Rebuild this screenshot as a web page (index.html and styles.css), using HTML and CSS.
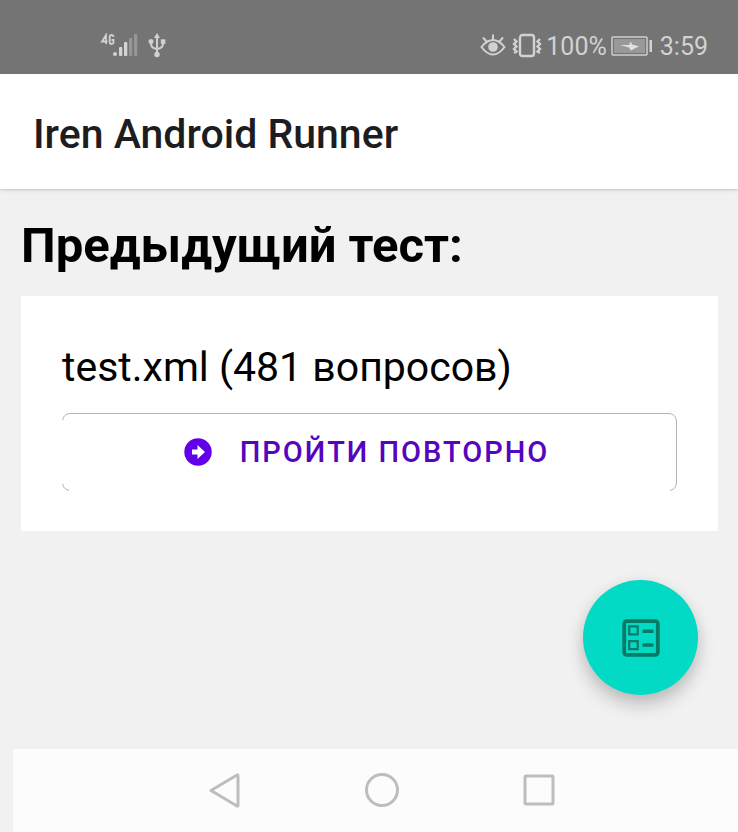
FILE: index.html
```html
<!DOCTYPE html>
<html lang="ru">
<head>
<meta charset="utf-8">
<meta name="viewport" content="width=device-width, initial-scale=1">
<title>Iren Android Runner</title>
<link rel="stylesheet" href="styles.css">
</head>
<body>
<div class="status">
  <div class="status-left">
    <svg width="38" height="28" viewBox="0 0 38 28" aria-hidden="true">
      <g fill="none" stroke="#d0d0d0" stroke-width="1.800"><path d="M6 11V2L2 8.500H7.500M13.500 4Q13.500 2 11.700 2T9.700 4V9Q9.700 11 11.700 11T13.500 9V7H11.500"/></g>
      <g fill="#d4d4d4"><rect x="13" y="19" width="4" height="4" rx="2"/><rect x="19" y="14" width="3.300" height="9" rx="1"/><rect x="24" y="9" width="3.300" height="14" rx="1"/></g>
      <g fill="#969696"><rect x="29" y="5" width="3.300" height="18" rx="1"/><rect x="34" y="1" width="3.300" height="22" rx="1"/></g>
    </svg>
    <svg width="18" height="28" viewBox="0 0 18 28" aria-hidden="true">
      <g fill="none" stroke="#d0d0d0" stroke-width="2"><path d="M9 4V22M3 8V11Q3 15 9 16Q15 15 15 11V8"/></g>
      <g fill="#d0d0d0"><path d="M9 0L12 5H6Z"/><circle cx="9" cy="21.500" r="2.700"/><circle cx="3" cy="8.500" r="2.500"/><rect x="12.800" y="6.300" width="4.600" height="4.600"/></g>
    </svg>
  </div>
  <div class="status-right">
    <svg width="26" height="28" viewBox="0 0 26 28" aria-hidden="true">
      <path d="M1.500 14Q7 7 13 7T24.500 14Q19 21.500 13 21.500T1.500 14ZM13 6.500V1.500M6.500 8.500L3 4.500M19.500 8.500L23 4.500" fill="none" stroke="#d2d2d2" stroke-width="2"/>
      <circle cx="13" cy="14" r="4.800" fill="#d2d2d2"/>
    </svg>
    <svg class="vibrate" width="30" height="28" viewBox="0 0 30 28" fill="none" stroke="#d2d2d2" aria-hidden="true">
      <rect x="8" y="2" width="14" height="21" rx="2.500" stroke-width="2.400"/>
      <path d="M2 6L4.500 8.500L2 11L4.500 13.500L2 16L4.500 18.500L2 20M28 6L25.500 8.500L28 11L25.500 13.500L28 16L25.500 18.500L28 20" stroke-width="2.400"/>
    </svg>
    <span>100%</span>
    <svg class="battery" width="42" height="28" viewBox="0 0 42 28" aria-hidden="true">
      <rect x="1" y="4" width="35" height="18" rx="1" fill="#747474" stroke="#cecece" stroke-width="1.500"/>
      <rect x="3" y="6" width="31" height="14" fill="#999"/>
      <path d="M9 12L18 12L20 8.500L21 11.500L28 13.200L20 17.500L18 14.500Z" fill="#e0e0e0"/>
      <rect x="38.500" y="7" width="2.500" height="12" fill="#d2d2d2"/>
    </svg>
    <time>3:59</time>
  </div>
</div>
<header class="appbar"><h1>Iren Android Runner</h1></header>
<main>
  <h2>Предыдущий тест:</h2>
  <section class="card">
    <p>test.xml (481 вопросов)</p>
    <button class="retry" type="button">
      <svg width="28" height="28" viewBox="0 0 28 28" aria-hidden="true"><circle cx="14" cy="14" r="13.700" fill="#6200ea"/><path d="M8 11.500H13.500V7L21 14L13.500 21V16.500H8Z" fill="#fff"/></svg>
      <span>ПРОЙТИ ПОВТОРНО</span>
    </button>
  </section>
  <button class="fab" type="button" aria-label="Выбрать тест">
    <svg width="38" height="38" viewBox="0 0 38 38" fill="none" stroke="#087a66" aria-hidden="true">
      <rect x="2.200" y="2.200" width="33.600" height="33.600" rx="2.500" stroke-width="3.800"/>
      <path d="M7.200 7.400H15.700V15.400H7.200ZM7.200 22.200H15.700V30.200H7.200Z" stroke-width="2.200"/>
      <path d="M20.500 12.200H31.500M20.500 26H31.500" stroke-width="3.600"/>
    </svg>
  </button>
</main>
<nav>
  <button type="button" aria-label="Назад"><svg width="36" height="36" viewBox="0 0 36 36"><path d="M4 18.500L30 3Q31 2.500 31 4V33Q31 34.500 30 34Z"/></svg></button>
  <button type="button" aria-label="Домой"><svg width="36" height="36" viewBox="0 0 36 36"><circle cx="18" cy="18" r="15.500"/></svg></button>
  <button type="button" aria-label="Недавние"><svg width="36" height="36" viewBox="0 0 36 36"><rect x="4" y="4" width="28" height="28" rx="1"/></svg></button>
</nav>
</body>
</html>
```
FILE: styles.css
```css
* { box-sizing: border-box; }
body {
  margin: 0;
  min-height: 100vh;
  display: flex;
  flex-direction: column;
  background: #f1f1f1;
  color: #000;
  font-family: Roboto, sans-serif;
}
h1, h2, p { margin: 0; }
svg { display: block; flex: none; }
button { font: inherit; padding: 0; border: 0; background: none; cursor: pointer; }

.status {
  display: flex;
  justify-content: space-between;
  padding: 32px 30px 12px 100px;
  background: #747474;
  color: #d2d2d2;
  font-size: 25px;
  line-height: 30px;
}
.status-left, .status-right { display: flex; align-items: center; }
.status-left { gap: 10px; }
.vibrate { margin: 0 4px 0 6px; }
.battery { margin: 0 7px 0 4px; }

.appbar {
  padding: 36px 33px 31px;
  background: #fff;
  box-shadow: 0 1px 2px rgba(0, 0, 0, .14), 0 2px 6px rgba(0, 0, 0, .05);
}
.appbar h1 { font-size: 41px; line-height: 48px; font-weight: 500; color: #1d1d1f; }

main {
  flex: 1;
  display: flex;
  flex-direction: column;
  padding: 28px 20px 54px 21px;
}
h2 { font-size: 49px; line-height: 58px; font-weight: 700; }
.card {
  margin-top: 21px;
  padding: 47px 41px 40px;
  background: #fff;
}
.card p { font-size: 41px; line-height: 48px; }
.retry {
  position: relative;
  display: flex;
  align-items: center;
  justify-content: center;
  gap: 28px;
  width: 100%;
  height: 78px;
  margin-top: 22px;
  padding-right: 6px;
  border: 1px solid #b4b4b4;
  border-radius: 8px;
  color: #5505bd;
  font-size: 29px;
  font-weight: 500;
  letter-spacing: 2px;
}
/* The outline fades out along the left and bottom edges. */
.retry::before {
  content: "";
  position: absolute;
  inset: -1px;
  background:
    linear-gradient(#fff, #fff) left center / 1px calc(100% - 14px) no-repeat,
    linear-gradient(#fff, #fff) center bottom / calc(100% - 14px) 1px no-repeat;
}
.fab {
  display: grid;
  place-items: center;
  align-self: flex-end;
  width: 115px;
  height: 115px;
  margin: auto 20px 0 0;
  border-radius: 50%;
  background: #03dac5;
  box-shadow: 0 10px 18px rgba(0, 0, 0, .2), 0 2px 14px rgba(0, 0, 0, .06);
}

nav {
  display: flex;
  justify-content: center;
  gap: 121px;
  margin-left: 13px;
  padding: 23px 0 24px 12px;
  background: #fcfcfc;
}
nav svg { fill: none; stroke: #bdbdbd; stroke-width: 3; stroke-linejoin: round; }
```
